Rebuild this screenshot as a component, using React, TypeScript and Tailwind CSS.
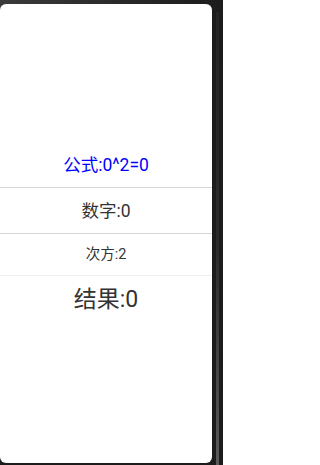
const font = { fontFamily: '"Roboto", "Noto Sans CJK SC", sans-serif' };

export default function App() {
  const number = 0;
  const power = 2;
  const result = Math.pow(number, power);

  return (
    <div className="flex h-[465px] w-[223px] overflow-hidden bg-gradient-to-br from-[#3a3a3a] via-[#1c1c1c] to-[#1c1c1c]" style={font}>
      <div className="mt-[4px] flex h-[459px] w-[212px] shrink-0 flex-col rounded-[6px] bg-white">
        {/* formula */}
        <div className="flex h-[183px] items-end justify-center pb-[12px]">
          <span className="text-[17.5px] leading-[20px] text-[#0000ff]">
            公式:{number}^{power}={result}
          </span>
        </div>
        <div className="flex h-[46px] items-center justify-center border-t border-[#d6d6d6]">
          <span className="text-[17.5px] leading-[20px] text-[#333333]">数字:{number}</span>
        </div>
        <div className="flex h-[42px] items-center justify-center border-t border-[#d6d6d6]">
          <span className="text-[14.5px] leading-[18px] text-[#333333]">次方:{power}</span>
        </div>
        <div className="flex justify-center border-t border-[#f0f0f0] pt-[10px]">
          <span className="text-[23px] leading-[28px] text-[#333333]">结果:{result}</span>
        </div>
      </div>
      <div className="flex flex-1 justify-center pt-[12px]">
        <div className="h-full w-[3px] bg-gradient-to-b from-[#252525] via-[#2a2a2a] to-[#5a5a5a]" />
      </div>
    </div>
  );
}
